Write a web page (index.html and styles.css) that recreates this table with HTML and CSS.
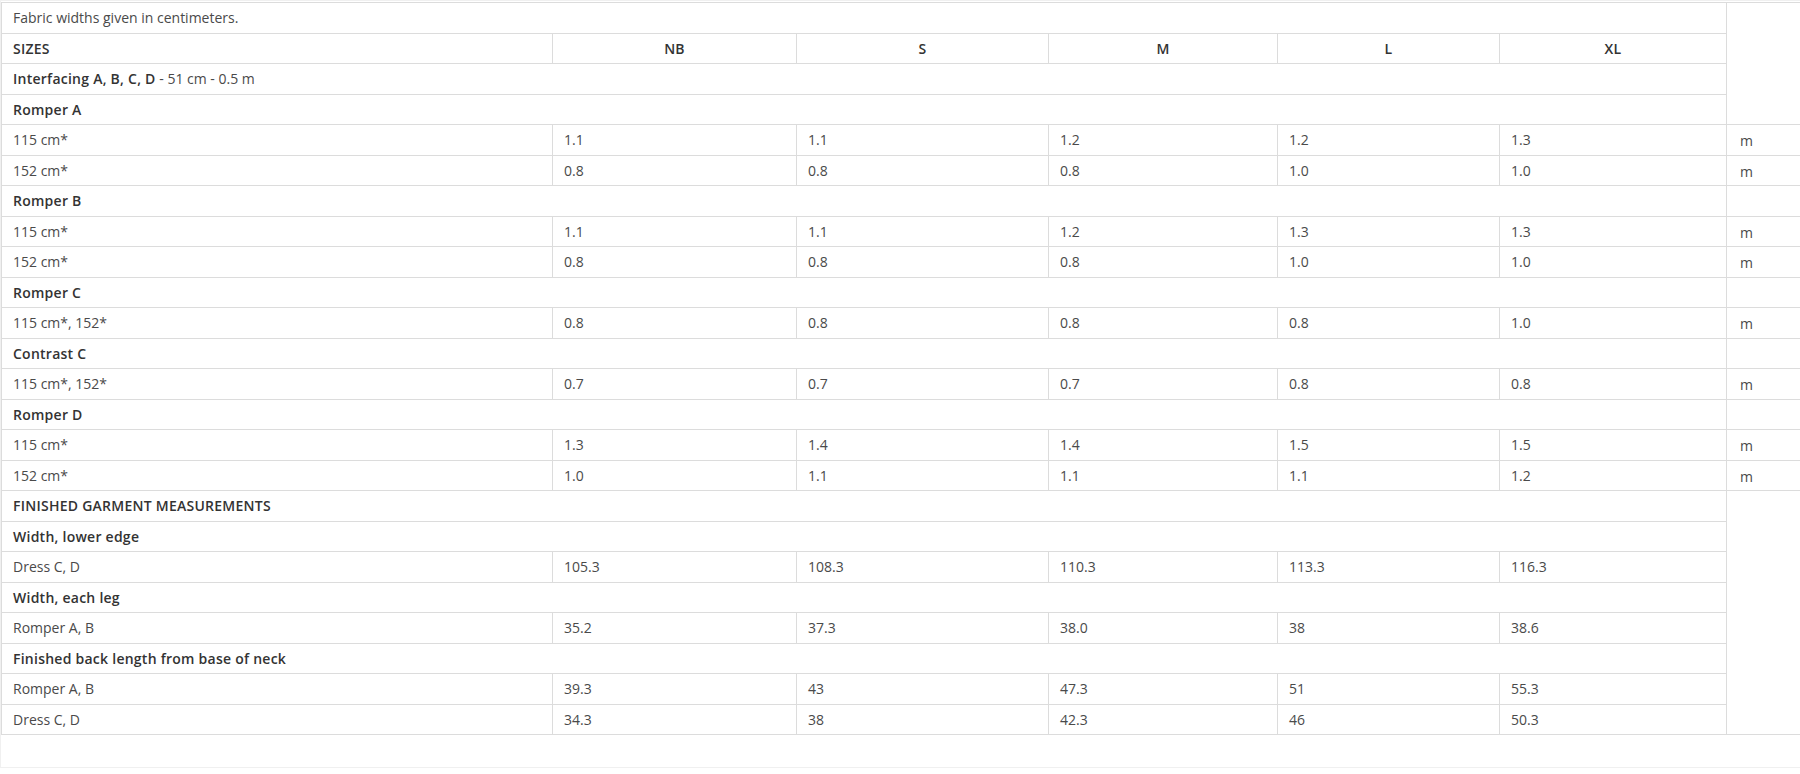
FILE: index.html
```html
<!DOCTYPE html>
<html>
<head>
<meta charset="utf-8">
<link rel="stylesheet" href="styles.css">
</head>
<body>
<div class="wrap">
<table class="chart">
<colgroup>
<col class="c-label"><col class="c-nb"><col class="c-s"><col class="c-m"><col class="c-l"><col class="c-xl"><col class="c-unit">
</colgroup>
<tbody>
<tr><td colspan="6">Fabric widths given in centimeters.</td><td rowspan="4" class="unit-blank"></td></tr>
<tr class="head"><td class="b">SIZES</td><td class="b ctr">NB</td><td class="b ctr">S</td><td class="b ctr">M</td><td class="b ctr">L</td><td class="b ctr">XL</td></tr>
<tr><td colspan="6"><span class="b">Interfacing A, B, C, D</span> - 51 cm - 0.5 m</td></tr>
<tr><td colspan="6" class="b">Romper A</td></tr>
<tr><td>115 cm*</td><td>1.1</td><td>1.1</td><td>1.2</td><td>1.2</td><td>1.3</td><td class="unit">m</td></tr>
<tr><td>152 cm*</td><td>0.8</td><td>0.8</td><td>0.8</td><td>1.0</td><td>1.0</td><td class="unit">m</td></tr>
<tr><td colspan="6" class="b">Romper B</td><td class="none"></td></tr>
<tr><td>115 cm*</td><td>1.1</td><td>1.1</td><td>1.2</td><td>1.3</td><td>1.3</td><td class="unit">m</td></tr>
<tr><td>152 cm*</td><td>0.8</td><td>0.8</td><td>0.8</td><td>1.0</td><td>1.0</td><td class="unit">m</td></tr>
<tr><td colspan="6" class="b">Romper C</td><td class="none"></td></tr>
<tr><td>115 cm*, 152*</td><td>0.8</td><td>0.8</td><td>0.8</td><td>0.8</td><td>1.0</td><td class="unit">m</td></tr>
<tr><td colspan="6" class="b">Contrast C</td><td class="none"></td></tr>
<tr><td>115 cm*, 152*</td><td>0.7</td><td>0.7</td><td>0.7</td><td>0.8</td><td>0.8</td><td class="unit">m</td></tr>
<tr><td colspan="6" class="b">Romper D</td><td class="none"></td></tr>
<tr><td>115 cm*</td><td>1.3</td><td>1.4</td><td>1.4</td><td>1.5</td><td>1.5</td><td class="unit">m</td></tr>
<tr><td>152 cm*</td><td>1.0</td><td>1.1</td><td>1.1</td><td>1.1</td><td>1.2</td><td class="unit">m</td></tr>
<tr><td colspan="6" class="b">FINISHED GARMENT MEASUREMENTS</td><td rowspan="8" class="unit-blank"></td></tr>
<tr><td colspan="6" class="b">Width, lower edge</td></tr>
<tr><td>Dress C, D</td><td>105.3</td><td>108.3</td><td>110.3</td><td>113.3</td><td>116.3</td></tr>
<tr><td colspan="6" class="b">Width, each leg</td></tr>
<tr><td>Romper A, B</td><td>35.2</td><td>37.3</td><td>38.0</td><td>38</td><td>38.6</td></tr>
<tr><td colspan="6" class="b">Finished back length from base of neck</td></tr>
<tr><td>Romper A, B</td><td>39.3</td><td>43</td><td>47.3</td><td>51</td><td>55.3</td></tr>
<tr><td>Dress C, D</td><td>34.3</td><td>38</td><td>42.3</td><td>46</td><td>50.3</td></tr>
</tbody>
</table>
</div>
</body>
</html>
```
FILE: styles.css
```css
html, body {
  margin: 0;
  padding: 0;
  background: #ffffff;
}
body {
  font-family: "Open Sans", "Liberation Sans", sans-serif;
  font-size: 14px;
  color: #4a4a4a;
}
.wrap {
  border: 1px solid #f0f0f0;
  border-right: none;
  padding: 1px 0 32px 0;
}
.chart {
  width: 100%;
  border-collapse: collapse;
  table-layout: fixed;
}
.c-label { width: 551px; }
.c-nb { width: 244px; }
.c-s { width: 252px; }
.c-m { width: 229px; }
.c-l { width: 222px; }
.c-xl { width: 227px; }
.c-unit { width: auto; }
.chart td {
  border: 1px solid #dcdcdc;
  padding: 5px 11px;
  line-height: 19.5px;
  height: 19.5px;
  text-align: left;
  vertical-align: middle;
  white-space: nowrap;
}
.chart td.unit,
.chart td.unit-blank {
  border-right: none;
}
.chart td.none {
  border-top: none;
  border-bottom: none;
  border-right: none;
}
.b {
  font-weight: 600;
  letter-spacing: 0.25px;
  color: #333333;
}
.chart td.ctr {
  text-align: center;
}
.chart td.unit {
  padding-left: 13px;
  padding-top: 6px;
  padding-bottom: 4px;
}
```
